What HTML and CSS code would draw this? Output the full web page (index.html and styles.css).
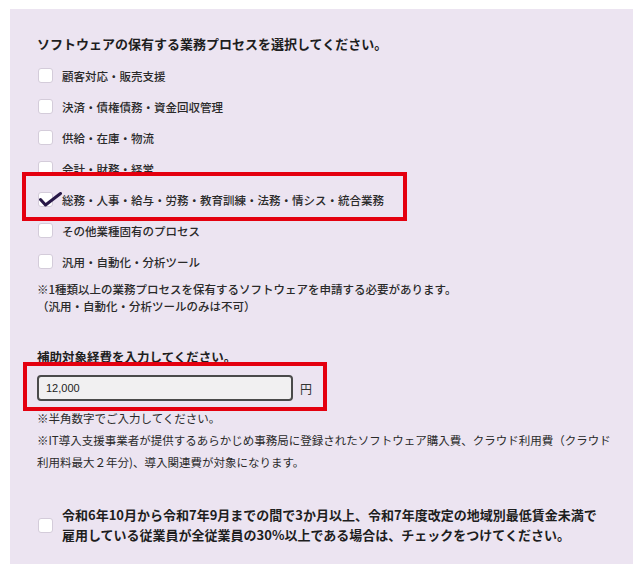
FILE: index.html
```html
<!DOCTYPE html>
<html lang="ja">
<head>
<meta charset="utf-8">
<link rel="stylesheet" href="styles.css">
</head>
<body>
<div class="panel">
  <h2 class="q-title">ソフトウェアの保有する業務プロセスを選択してください。</h2>
  <ul class="options">
    <li class="option"><span class="box"></span><span class="label">顧客対応・販売支援</span></li>
    <li class="option"><span class="box"></span><span class="label">決済・債権債務・資金回収管理</span></li>
    <li class="option"><span class="box"></span><span class="label">供給・在庫・物流</span></li>
    <li class="option"><span class="box"></span><span class="label">会計・財務・経営</span></li>
    <li class="option highlight"><span class="box checked"><svg class="tick" viewBox="0 0 24 16" width="24" height="16"><polyline points="1.5,7.5 6.5,13 21.5,1.5" fill="none" stroke="#281848" stroke-width="3" stroke-linecap="round" stroke-linejoin="round"/></svg></span><span class="label">総務・人事・給与・労務・教育訓練・法務・情シス・統合業務</span></li>
    <li class="option"><span class="box"></span><span class="label">その他業種固有のプロセス</span></li>
    <li class="option"><span class="box"></span><span class="label">汎用・自動化・分析ツール</span></li>
  </ul>
  <p class="note">※1種類以上の業務プロセスを保有するソフトウェアを申請する必要があります。<br>（汎用・自動化・分析ツールのみは不可）</p>

  <h3 class="q-title2">補助対象経費を入力してください。</h3>
  <div class="amount-row highlight2">
    <div class="amount-input">12,000</div>
    <span class="yen">円</span>
  </div>
  <p class="hint">※半角数字でご入力してください。</p>
  <p class="hint2">※IT導入支援事業者が提供するあらかじめ事務局に登録されたソフトウェア購入費、クラウド利用費（クラウド利用料最大２年分)、導入関連費が対象になります。</p>

  <div class="final">
    <span class="box"></span>
    <p class="final-text">令和6年10月から令和7年9月までの間で3か月以上、令和7年度改定の地域別最低賃金未満で<br>雇用している従業員が全従業員の30%以上である場合は、チェックをつけてください。</p>
  </div>
</div>
</body>
</html>
```

FILE: styles.css
```css
html, body {
  margin: 0;
  padding: 0;
  background: #ffffff;
}
body {
  font-family: "Noto Sans CJK JP", "Noto Sans", sans-serif;
  color: #222222;
}
.panel {
  margin: 9px 0 0 10px;
  width: 623px;
  height: 555px;
  box-sizing: border-box;
  background: #ece4f1;
  padding: 26px 20px 0 27px;
}
.q-title {
  margin: 0;
  font-size: 13px;
  line-height: 18px;
  font-weight: 700;
  color: #1e1e1e;
}
.options {
  list-style: none;
  margin: 7px 0 0 0;
  padding: 0;
}
.option {
  position: relative;
  display: flex;
  align-items: center;
  height: 31px;
}
.box {
  position: relative;
  flex: none;
  width: 15px;
  height: 15px;
  box-sizing: border-box;
  background: #ffffff;
  border: 1px solid #d4ccda;
  border-radius: 3px;
  margin-left: 1px;
}
.tick {
  position: absolute;
  left: 0;
  top: -1px;
}
.label {
  margin-left: 9px;
  font-size: 11.5px;
  line-height: 16px;
  font-weight: 500;
  color: #2a2a2a;
}
.highlight::after {
  content: "";
  position: absolute;
  left: -15px;
  top: -12px;
  width: 385px;
  height: 49px;
  box-sizing: border-box;
  border: 4px solid #e4000f;
}
.note {
  margin: 4px 0 0 0;
  font-size: 11.5px;
  line-height: 17px;
  font-weight: 500;
  color: #2a2a2a;
}
.q-title2 {
  margin: 33px 0 0 0;
  font-size: 12.5px;
  line-height: 18px;
  font-weight: 700;
  color: #1e1e1e;
}
.amount-row {
  position: relative;
  display: flex;
  align-items: center;
  margin-top: 9px;
  height: 26px;
}
.highlight2::after {
  content: "";
  position: absolute;
  left: -14px;
  top: -13px;
  width: 304px;
  height: 49px;
  box-sizing: border-box;
  border: 4px solid #e4000f;
}
.amount-input {
  width: 256px;
  height: 26px;
  box-sizing: border-box;
  border: 2px solid #4a4a4a;
  border-radius: 4px;
  background: #f1f0f1;
  padding-left: 7px;
  font-family: "Liberation Sans", Arial, sans-serif;
  font-size: 11px;
  line-height: 22px;
  color: #222222;
}
.yen {
  margin-left: 7px;
  font-size: 12px;
  color: #333333;
}
.hint {
  margin: 6px 0 0 0;
  font-size: 11.5px;
  line-height: 22px;
  color: #2a2a2a;
}
.hint2 {
  margin: 0;
  font-size: 11.5px;
  line-height: 22px;
  color: #2a2a2a;
  width: 575px;
}
.final {
  display: flex;
  align-items: center;
  margin-top: 32px;
}
.final-text {
  margin: 0 0 0 9px;
  font-size: 13px;
  line-height: 20px;
  font-weight: 700;
  color: #1e1e1e;
}
```
